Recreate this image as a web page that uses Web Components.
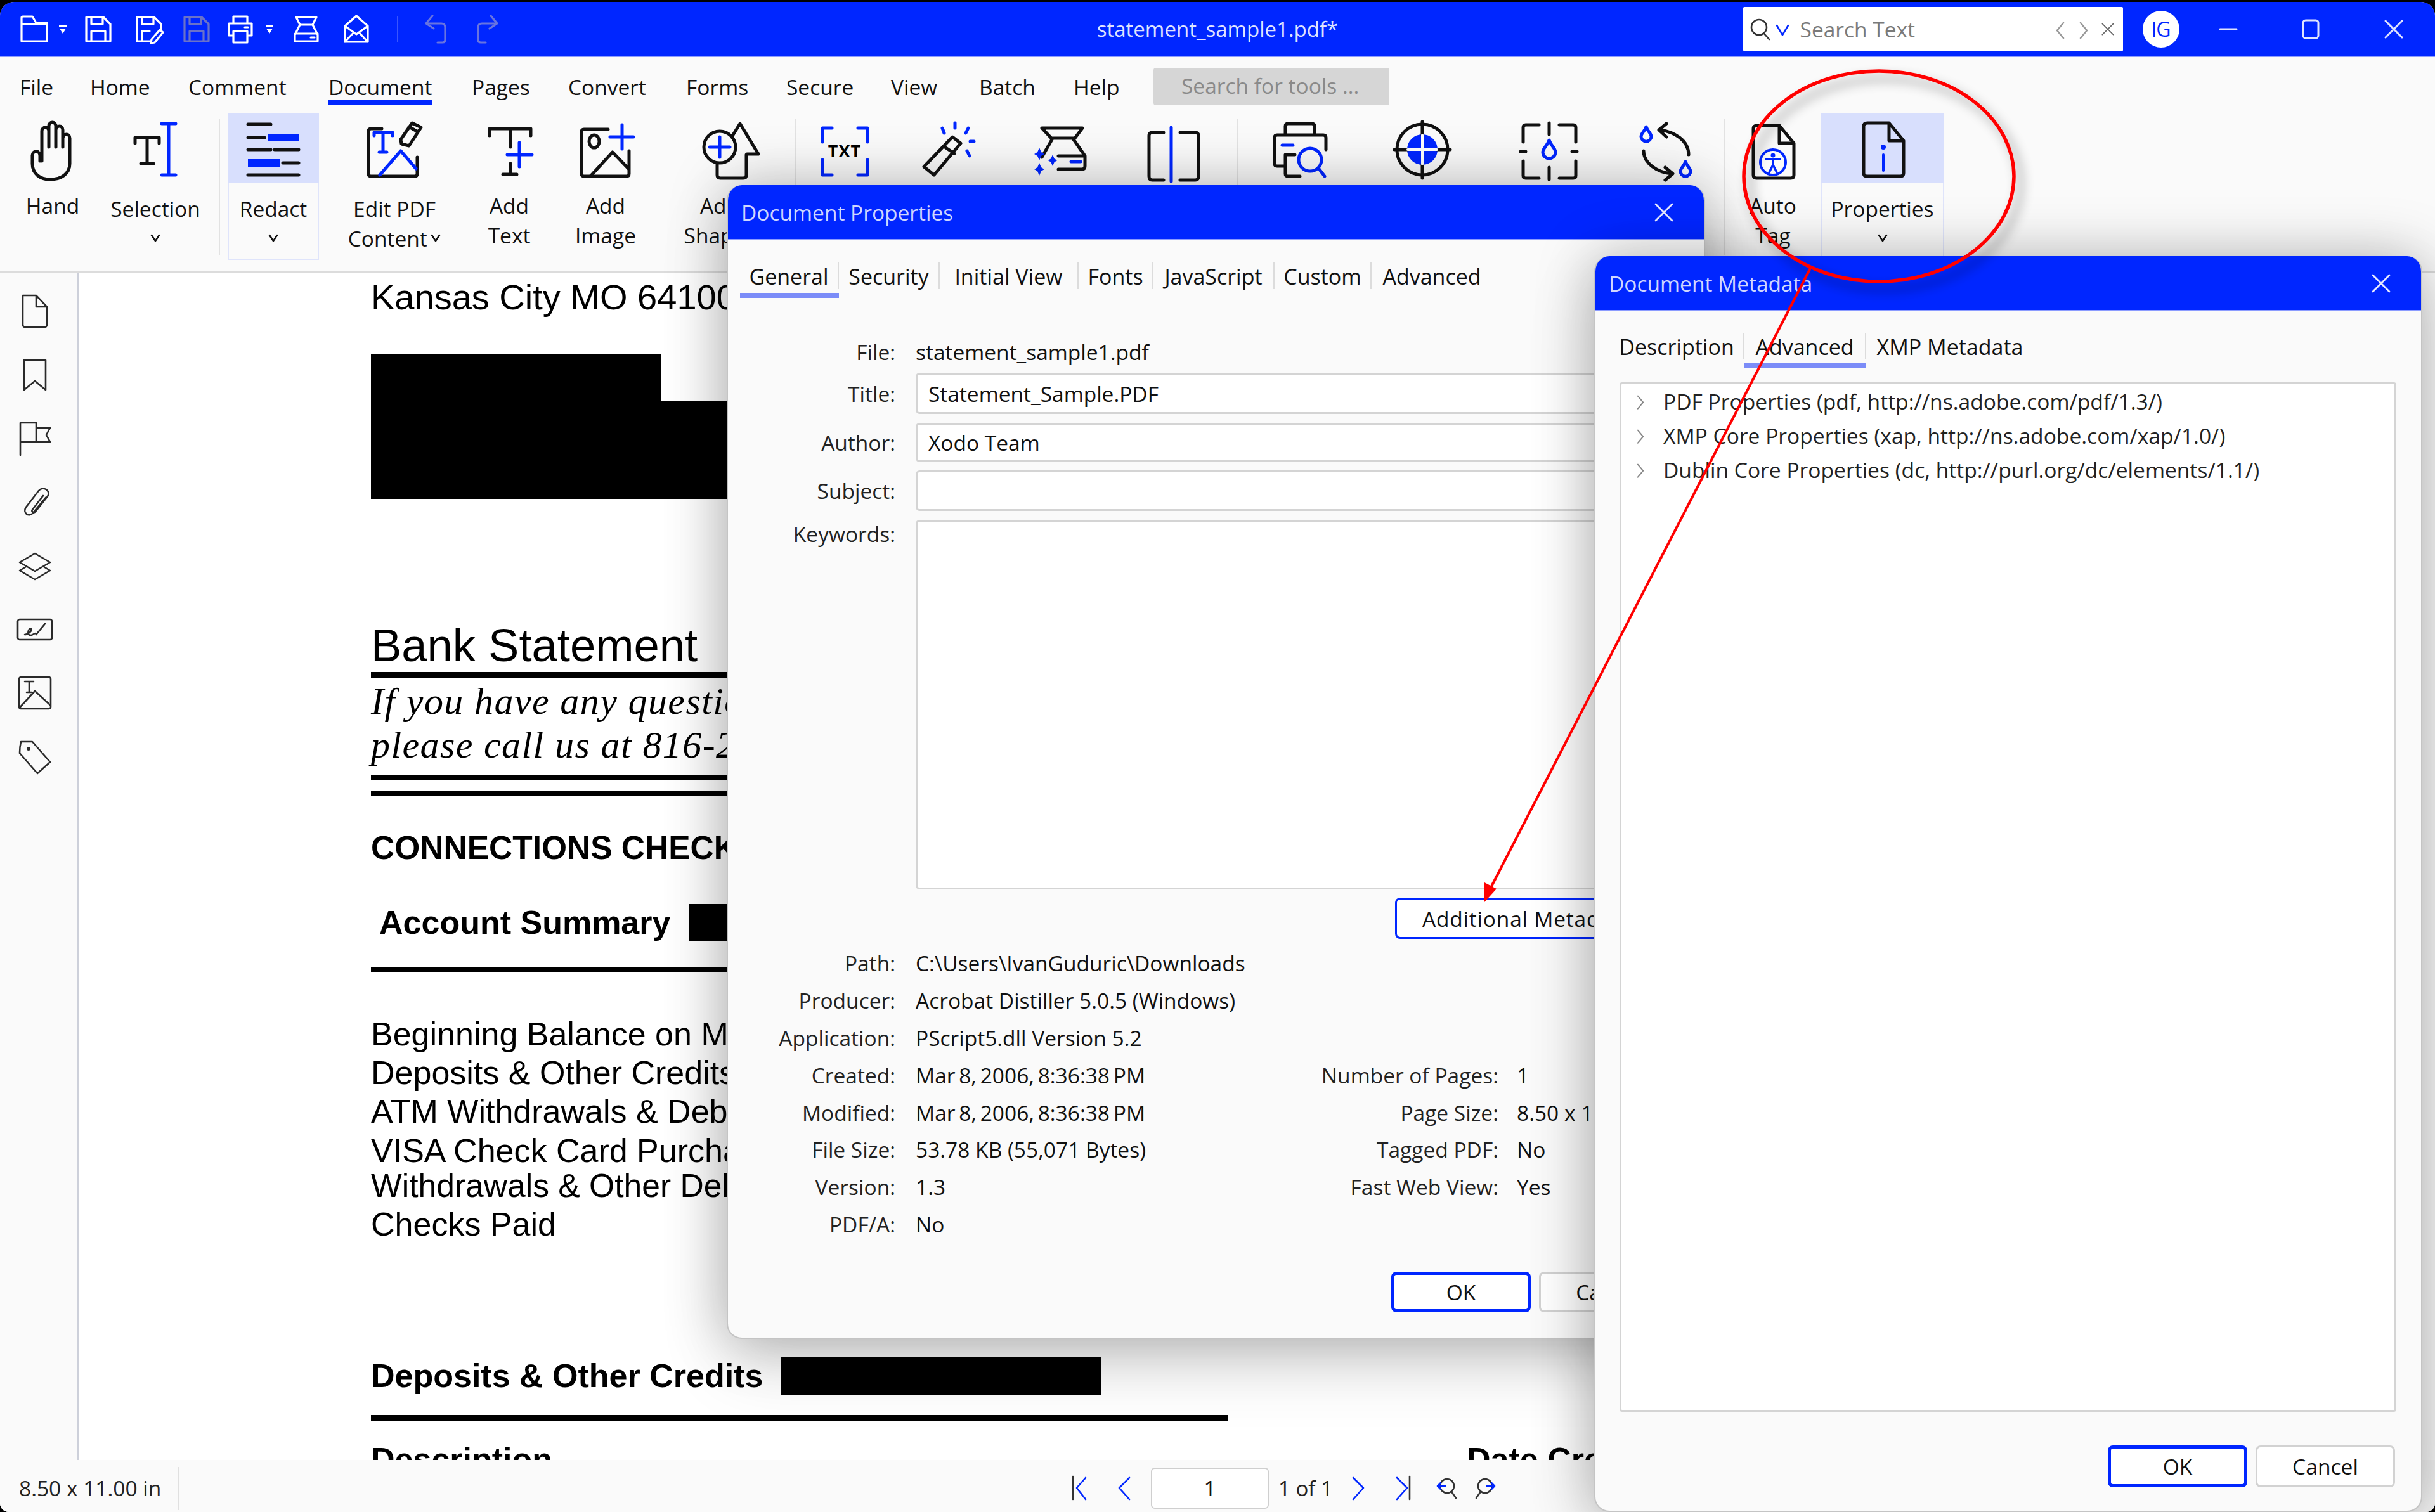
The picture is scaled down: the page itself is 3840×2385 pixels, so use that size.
<!DOCTYPE html>
<html lang="en"><head><meta charset="utf-8"><title>statement_sample1.pdf</title>
<style>
html,body{margin:0;padding:0;background:#000}
body{font-family:"Open Sans","Noto Sans",sans-serif;font-size:33.5px;color:#111}
</style></head>
<body>
<xo-app>
  <xo-titlebar slot="top"></xo-titlebar>
  <xo-menubar slot="top"></xo-menubar>
  <xo-ribbon slot="top"></xo-ribbon>
  <xo-rail slot="rail"></xo-rail>
  <xo-pdf slot="doc"></xo-pdf>
  <xo-status slot="bottom"></xo-status>

  <xo-dialog slot="float" heading="Document Properties" style="left:1146px;top:292px;width:1543px;height:1820px;z-index:2">
    <xo-tabs style="margin:32px 0 0 19px" items="General:156,Security:159,Initial View:219,Fonts:118,JavaScript:191,Custom:153,Advanced:190" active="0"></xo-tabs>
    <xo-props></xo-props>
  </xo-dialog>

  <xo-dialog slot="float" heading="Document Metadata" style="left:2514px;top:404px;width:1306px;height:1981px;z-index:4">
    <xo-tabs style="margin:31px 0 0 23px" items="Description:212,Advanced:192,XMP Metadata:264" active="1"></xo-tabs>
    <xo-meta></xo-meta>
  </xo-dialog>

  <xo-annot slot="float" style="z-index:5"></xo-annot>
</xo-app>

<script>
const BLUE='#0026ff';
const star=(x,y,r)=>`<path class="bf" d="M${x} ${y-r}L${x+r*.3} ${y-r*.3}L${x+r*.8} ${y}L${x+r*.3} ${y+r*.3}L${x} ${y+r}L${x-r*.3} ${y+r*.3}L${x-r*.8} ${y}L${x-r*.3} ${y-r*.3}Z"/>`;
const drop=(x,y,r)=>`<path class="b" d="M${x} ${y-r*1.5}C${x+r*.3} ${y-r*.6} ${x+r} ${y-r*.2} ${x+r} ${y+r*.4}A${r} ${r} 0 0 1 ${x-r} ${y+r*.4}C${x-r} ${y-r*.2} ${x-r*.3} ${y-r*.6} ${x} ${y-r*1.5}Z"/>`;
const ICONS={
 hand:[100,`<path d="M30 68V60C30 51 19 50 18 59V72C18 88 30 97 46 97C64 97 77 88 77 72V32C77 24 67 24 66 32V46M66 46V19C66 11 56 11 55 19V46M55 46V13C55 5 44 5 44 13V46M44 46V21C44 13 33 13 33 21V68"/>`],
 selection:[100,`<path d="M18 40V31H56V40M37 31V72M27 72H47"/><path class="b" d="M60 9H82M71 9V90M60 90H82"/>`],
 redact:[100,`<path d="M10 10H46M10 31H36M10 50H46M52 50H90M65 71H90M10 90H90"/><rect class="bf" x="42" y="25" width="48" height="12"/><rect class="bf" x="10" y="65" width="50" height="12"/>`],
 editpdf:[100,`<path d="M30 17H13Q9 17 9 21V88Q9 92 13 92H82Q86 92 86 88V62"/><path d="M78 8L92 15L73 44L61 41L60 34ZM73 14L87 22"/><path class="b" d="M18 28V23H47V28M32 23V54M26 54H38M27 90L60 52L84 80"/>`],
 addtext:[100,`<path d="M19 28V17H84V28M52 17V46M52 72V89M40 89H62"/><path class="b" d="M47 58H86M66 39V77"/>`],
 addimage:[100,`<path d="M54 18H16Q12 18 12 22V88Q12 92 16 92H83Q87 92 87 88V52"/><ellipse cx="32" cy="37" rx="8" ry="10"/><path d="M26 92L61 54L86 80"/><path class="b" d="M57 30H94M76 11V49"/>`],
 addshape:[100,`<circle cx="50" cy="46" r="25"/><path d="M69 30L82 9L111 57H93M46 71V90Q46 95 51 95H87Q92 95 92 90V58"/><path class="b" d="M50 30V62M34 46H66"/>`],
 txt:[100,`<path class="b" d="M15 38V16H30M71 16H86V38M15 66V90H30M71 90H86V66"/><text x="50" y="62" text-anchor="middle" font-family="'Open Sans',sans-serif" font-weight="700" font-size="27" letter-spacing="1" fill="#000" stroke="none">TXT</text>`],
 wand:[100,`<path d="M55 30L68 40L26 90L10 77ZM43 46L58 56"/><path class="b" d="M59 8V16M39 16L42 24M80 16L76 24M83 37H89M78 52L82 60"/>`],
 scan:[100,`<path d="M20 16H84L72 32H35ZM36 34L20 62M70 34L88 60V76Q88 81 83 81H46M46 60H88"/><path class="b" d="M66 69H81"/>${star(16,57,10)}${star(37,67,9)}${star(16,81,10)}`],
 split:[100,`<path d="M34 23H16Q11 23 11 28V92Q11 98 16 98H34M60 23H84Q89 23 89 28V92Q89 98 84 98H60"/><path class="b" d="M46 15V100"/>`],
 printsearch:[100,`<path d="M27 27V13Q27 9 31 9H69Q73 9 73 13V27M91 50V31Q91 27 87 27H14Q10 27 10 31V72Q10 76 14 76H26M27 58V88Q27 92 31 92H50M27 58H42"/><path class="b" d="M22 43H39M79 79L89 92"/><circle class="b" cx="66" cy="66" r="18"/>`],
 target:[100,`<circle cx="50" cy="50" r="40"/><circle class="bf" cx="50" cy="50" r="24"/><path d="M6 50H27M73 50H94M50 6V27M50 73V95"/><path style="stroke:#fff;stroke-width:4" d="M27 50H73M50 27V73"/>`],
 cropdrop:[100,`<path d="M9 38V15Q9 11 13 11H34M66 11H88Q92 11 92 15V38M9 68V91Q9 95 13 95H34M66 95H88Q92 95 92 91V68M5 53H13M86 53H94M50 8V26M50 78V97"/>${drop(50,50,10)}`],
 refreshdrop:[100,`<path d="M40 19C62 22 85 35 85 58M50 9L38 19L50 30M14 52C14 72 36 86 58 88M48 78L60 88L48 98"/>${drop(18,26,8)}${drop(80,81,8)}`],
 autotag:[100,`<path d="M25 12H60L83 40V90Q83 95 78 95H24Q19 95 19 90V17Q19 12 25 12ZM60 12V40H83"/><circle class="b" style="stroke-width:4" cx="50" cy="70" r="20"/><circle class="bf" cx="50" cy="59" r="3.5"/><path class="b" style="stroke-width:3.5" d="M39 65H61M50 65V74M50 74L44 86M50 74L56 86"/>`],
 properties:[100,`<path d="M26 8H60L83 36V87Q83 92 78 92H25Q20 92 20 87V13Q20 8 26 8ZM60 8V36H83"/><circle class="bf" cx="51" cy="46" r="4"/><path class="b" style="stroke-width:4" d="M51 58V83"/>`],
 chev:[16,`<path d="M2 4L8 13L14 4"/>`],
 folder:[46,`<path d="M3 42V5Q3 3 5 3H20L26 13H43V42ZM3 15H43"/>`],
 save:[46,`<path d="M4 4H31L42 15V42H4ZM12 4V15H30V4M12 42V26H34V42"/>`],
 saveas:[46,`<path d="M4 4H31L42 15V26M26 42H4V4M12 4V15H30V4M12 42V26H24"/><path d="M40 24L45 28L32 44L26 45L27 39Z"/>`],
 print:[46,`<path d="M12 14V3H34V14M5 33V14H41V33H34M12 33H5M12 26H34V44H12ZM30 20H35"/>`],
 scantop:[46,`<path d="M7 4H39L33 16H13ZM13 16L5 32V42H41V32L33 16M5 30H41M30 36H36"/>`],
 mail:[46,`<path d="M5 18L23 2L41 18V43H5ZM5 18L23 31L41 18M5 43L19 28M41 43L27 28"/>`],
 undo:[46,`<path d="M14 2L4 14L16 22M4 14H28Q34 14 34 20V40Q34 44 30 44H22"/>`],
 redo:[46,`<path d="M32 2L42 14L30 22M42 14H18Q12 14 12 20V40Q12 44 16 44H24"/>`],
 tri:[16,`<path style="fill:currentColor;stroke:none" d="M2 1H14V4H2ZM3 7H13L8 15Z"/>`],
 rdoc:[56,`<path d="M9 4H30L47 22V50Q47 54 43 54H13Q9 54 9 50ZM30 4V22H47"/>`],
 rbook:[56,`<path d="M11 5H45V52L28 38L11 52Z"/>`],
 rflag:[56,`<path d="M5 55V4H30V34H5M30 12H52L46 23L52 34H30"/>`],
 rclip:[56,`<path d="M45 21L25 45C19 53 8 45 14 36L34 10C41 2 54 10 48 19L29 43C26 46 22 43 24 40L41 18"/>`],
 rlayer:[56,`<path d="M28 9L52 23L28 37L4 23ZM14 30L4 36L28 50L52 36L42 30"/>`],
 rsign:[56,`<rect x="1" y="12" width="54" height="32" rx="3"/><path d="M12 36C16 36 25 30 22 27C18 25 15 35 20 37C24 38 26 34 29 34M30 36L44 19"/>`],
 rimage:[56,`<rect x="3" y="3" width="50" height="50" rx="3"/><path d="M12 10H26M19 10V27M15 27H23M5 50L28 25L52 47"/>`],
 rtag:[56,`<path d="M6 4H24L52 36L32 54L4 22Q4 12 6 4Z"/><circle cx="18" cy="15" r="1.6"/>`],
 first:[40,`<path class="g" d="M8 2V38"/><path class="b" d="M28 4L14 20L28 38"/>`],
 prev:[40,`<path class="b" d="M29 4L13 20L29 38"/>`],
 next:[40,`<path class="b" d="M12 4L28 20L12 38"/>`],
 last:[40,`<path class="b" d="M11 4L27 20L11 38"/><path class="g" d="M31 2V38"/>`],
 zback:[40,`<circle class="g" cx="20" cy="17" r="11"/><path class="g" d="M27 26L34 36"/><path class="b" d="M5 17H17M10 12L5 17L10 22"/>`],
 zfwd:[40,`<circle class="g" cx="20" cy="17" r="11"/><path class="g" d="M13 26L6 36"/><path class="b" d="M23 17H35M30 12L35 17L30 22"/>`],
 magn:[36,`<circle cx="15" cy="15" r="12"/><path d="M23 25L31 34"/>`],
 thin:[24,`<path d="M3 6L12 21L21 6"/>`],
 lt:[24,`<path d="M17 2L7 14L17 26"/>`],
 gt:[24,`<path d="M7 2L17 14L7 26"/>`],
 x:[30,`<path d="M2 2L28 28M28 2L2 28"/>`],
 min:[30,`<path d="M2 15H28"/>`],
 max:[30,`<rect x="3" y="1" width="24" height="28" rx="4"/>`]
};
function def(name,css,html,init){
  customElements.define(name,class extends HTMLElement{
    connectedCallback(){
      if(this.shadowRoot)return;
      const r=this.attachShadow({mode:'open'});
      r.innerHTML=`<style>${css}</style>`+(typeof html==='function'?html(this):html);
      if(init)init(this,r);
    }
  });
}
def('xo-icon',`:host{display:inline-block;flex:none;line-height:0}
svg{display:block;overflow:visible;fill:none;stroke:currentColor;stroke-width:var(--sw,5);stroke-linecap:round;stroke-linejoin:round}
.b{stroke:${BLUE}}.bf{fill:${BLUE};stroke:none}.g{stroke:#333}`,
 h=>{const [v,c]=ICONS[h.getAttribute('name')];const s=h.getAttribute('size')||v;
 return `<svg viewBox="0 0 ${v} ${v}" width="${s}" height="${s}">${c}</svg>`});

def('xo-app',`:host{display:block;position:relative;width:3840px;height:2385px;overflow:hidden;background:#000}
.win{position:absolute;inset:3px 0 0 0;border-radius:22px 22px 14px 14px;overflow:hidden;background:#fafafa;display:flex;flex-direction:column}
.mid{flex:1;display:flex;min-height:0;overflow:hidden}
::slotted(xo-dialog),::slotted(xo-annot){position:absolute}
`,`<div class="win"><slot name="top"></slot><div class="mid"><slot name="rail"></slot><slot name="doc"></slot></div><slot name="bottom"></slot></div><slot name="float"></slot>`);

def('xo-titlebar',`:host{display:flex;align-items:center;height:85px;background:${BLUE};border-bottom:2px solid #8c9cff;color:#fff;flex:none;font-size:33.5px}
.side{flex:1 1 0;display:flex;align-items:center;min-width:0}
.r{justify-content:flex-end}
.t{color:#dfe3ff;white-space:nowrap;font-size:33px}
.l{--sw:3.2}
.dis{color:#6a72c8}.fade{color:#6874e0}
.sep{width:2px;height:42px;background:#3a55ff}
.search{width:599px;height:70px;background:#fff;box-sizing:border-box;display:flex;align-items:center;color:#7a7a7a;padding-left:10px;font-size:33.5px;--sw:2.6;border-radius:2px}
.search span{width:398px;margin-left:16px;white-space:nowrap}
.av{width:58px;height:58px;border-radius:50%;background:#fff;color:${BLUE};display:flex;align-items:center;justify-content:center;margin-left:31px;font-size:32px;letter-spacing:-1px;margin-right:12px}
.w{width:130.5px;display:flex;justify-content:center;color:#dfe3ff;--sw:3}
`,`<div class="side l">
<xo-icon name="folder" style="margin-left:31px"></xo-icon><xo-icon name="tri" style="margin-left:14px"></xo-icon>
<xo-icon name="save" style="margin-left:25px"></xo-icon><xo-icon name="saveas" style="margin-left:34px"></xo-icon>
<xo-icon name="save" class="dis" style="margin-left:29px"></xo-icon><xo-icon name="print" style="margin-left:23px"></xo-icon>
<xo-icon name="tri" style="margin-left:15px"></xo-icon><xo-icon name="scantop" style="margin-left:27px"></xo-icon>
<xo-icon name="mail" style="margin-left:33px"></xo-icon><div class="sep" style="margin-left:41px"></div>
<xo-icon name="undo" class="fade" style="margin-left:40px"></xo-icon><xo-icon name="redo" class="fade" style="margin-left:28px"></xo-icon>
</div>
<div class="t">statement_sample1.pdf*</div>
<div class="side r">
<div class="search"><xo-icon name="magn" style="color:#333"></xo-icon><xo-icon name="thin" style="color:${BLUE};margin-left:4px"></xo-icon><span>Search Text</span>
<xo-icon name="lt" style="color:#999"></xo-icon><xo-icon name="gt" style="color:#999;margin-left:13px"></xo-icon><xo-icon name="x" size="20" style="color:#666;margin-left:16px"></xo-icon></div>
<div class="av">IG</div>
<div class="w"><xo-icon name="min"></xo-icon></div><div class="w"><xo-icon name="max"></xo-icon></div><div class="w"><xo-icon name="x"></xo-icon></div>
</div>`);

def('xo-menu-item',`:host{display:block;flex:none;height:56px}
span{display:inline-block;height:56px;line-height:54px;white-space:nowrap;box-sizing:border-box}
:host([active]) span{box-shadow:inset 0 -8px 0 ${BLUE}}`,`<span><slot></slot></span>`);
def('xo-menubar',`:host{display:flex;height:80px;box-sizing:border-box;padding:20px 0 0 31px;background:#fafafa;flex:none;color:#111;font-size:33.5px}
.s{width:372px;height:59px;margin-top:-3px;background:#d6d6d6;color:#8a8a8a;border-radius:4px;line-height:56px;padding-left:44px;box-sizing:border-box;white-space:nowrap}`,
`<xo-menu-item style="width:111px">File</xo-menu-item><xo-menu-item style="width:155px">Home</xo-menu-item>
<xo-menu-item style="width:221px">Comment</xo-menu-item><xo-menu-item active style="width:226px">Document</xo-menu-item>
<xo-menu-item style="width:152px">Pages</xo-menu-item><xo-menu-item style="width:186px">Convert</xo-menu-item>
<xo-menu-item style="width:158px">Forms</xo-menu-item><xo-menu-item style="width:165px">Secure</xo-menu-item>
<xo-menu-item style="width:139px">View</xo-menu-item><xo-menu-item style="width:149px">Batch</xo-menu-item>
<xo-menu-item style="width:126px">Help</xo-menu-item><div class="s">Search for tools ...</div>`);

def('xo-ribbon-item',`:host{display:block;flex:none;box-sizing:border-box;height:232px;color:#111;font-size:33.5px}
.ic{height:110px;display:flex;justify-content:center;padding-top:8px;box-sizing:border-box}
.lb{text-align:center;line-height:47px;padding-top:13px;white-space:nowrap}
:host([low]) .lb{padding-top:18px}
:host([active]){border:2px solid #dfe4fb;border-top:0}
:host([active]) .ic{background:#d8dffd;margin:0 -2px}
.ch{display:flex;justify-content:center;height:44px;align-items:center;--sw:2.6}
`,h=>`<div class="ic"><xo-icon name="${h.getAttribute('icon')}"></xo-icon></div><div class="lb"><slot></slot></div>`+(h.hasAttribute('chev')?`<div class="ch"><xo-icon name="chev"></xo-icon></div>`:''));
def('xo-ribbon',`:host{display:flex;box-sizing:content-box;padding-top:8px;height:250px;background:#fafafa;border-bottom:2px solid #dcdcdc;flex:none;overflow:hidden}
.sep{width:2px;height:215px;margin-top:9px;background:#e2e2e2;flex:none}
`,`<xo-ribbon-item icon="hand" style="width:166px">Hand</xo-ribbon-item>
<xo-ribbon-item icon="selection" low chev style="width:158px">Selection</xo-ribbon-item>
<div class="sep" style="margin-left:21px"></div>
<xo-ribbon-item icon="redact" low chev active style="width:144px;margin-left:12px">Redact</xo-ribbon-item>
<xo-ribbon-item icon="editpdf" low style="width:238px">Edit PDF<br>Content&#8201;<xo-icon name="chev" style="--sw:2.6;vertical-align:6px"></xo-icon></xo-ribbon-item>
<xo-ribbon-item icon="addtext" style="width:124px">Add<br>Text</xo-ribbon-item>
<xo-ribbon-item icon="addimage" style="width:180px">Add<br>Image</xo-ribbon-item>
<xo-ribbon-item icon="addshape" style="width:180px">Add<br>Shapes</xo-ribbon-item>
<div class="sep" style="margin-left:29px"></div>
<xo-ribbon-item icon="txt" style="width:152px"></xo-ribbon-item>
<xo-ribbon-item icon="wand" style="width:178px"></xo-ribbon-item>
<xo-ribbon-item icon="scan" style="width:174px"></xo-ribbon-item>
<xo-ribbon-item icon="split" style="width:182px"></xo-ribbon-item>
<div class="sep" style="margin-left:9px"></div>
<xo-ribbon-item icon="printsearch" style="width:194px"></xo-ribbon-item>
<xo-ribbon-item icon="target" style="width:192px"></xo-ribbon-item>
<xo-ribbon-item icon="cropdrop" style="width:208px"></xo-ribbon-item>
<xo-ribbon-item icon="refreshdrop" style="width:162px"></xo-ribbon-item>
<div class="sep" style="margin-left:10px"></div>
<xo-ribbon-item icon="autotag" style="width:150px">Auto<br>Tag</xo-ribbon-item>
<xo-ribbon-item icon="properties" low chev active style="width:195px">Properties</xo-ribbon-item>`);

def('xo-rail',`:host{display:flex;flex-direction:column;width:122px;box-sizing:content-box;background:#fafafa;border-right:3px solid #cdd0da;padding-top:10px;flex:none;color:#2a2a2a;--sw:2.6}
div{height:100.5px;display:flex;align-items:center;justify-content:center;padding-right:12px}`,
['rdoc','rbook','rflag','rclip','rlayer','rsign','rimage','rtag'].map(n=>`<div><xo-icon name="${n}"></xo-icon></div>`).join(''));

const SERIF="font:italic 60px/64px 'Liberation Serif',serif;letter-spacing:1.4px";
const P=[
 ['t',438.6,60,'Kansas City MO 64100','font-size:56px'],
 ['b',559,73,457],['b',632,155,800],
 ['t',980,76,'Bank Statement','font-size:72.4px'],
 ['r',1060,10,1352],
 ['t',1073.75,64,'If you have any questio',SERIF],
 ['t',1142.75,64,'please call us at 816-2',SERIF],
 ['r',1222,8,1352],['r',1248,8,1352],
 ['t',1310.2,54,'CONNECTIONS CHECK','font-size:51.5px;font-weight:700'],
 ['x',1426,59,'Account Summary',502,13,300],
 ['r',1525,9,1352],
 ['t',1604,54,'Beginning Balance on M','font-size:52px'],
 ['t',1665,54,'Deposits &amp; Other Credits','font-size:52px'],
 ['t',1726,54,'ATM Withdrawals &amp; Deb','font-size:52px'],
 ['t',1788,54,'VISA Check Card Purcha','font-size:52px'],
 ['t',1843,54,'Withdrawals &amp; Other Deb','font-size:51.6px'],
 ['t',1904,54,'Checks Paid','font-size:52px'],
 ['x',2140,61,'Deposits &amp; Other Credits',647,0,505],
 ['r',2232,9,1352],
 ['y',2275,54,'Description','Date Credited',1728]
];
def('xo-pdf',`:host{display:block;flex:1;min-width:0;background:#fff;color:#000;overflow:hidden;padding-left:460px;font-family:"Liberation Sans",Arial,sans-serif}
.t,.f{white-space:nowrap}.f{display:flex;align-items:center;font:700 52px "Liberation Sans",Arial,sans-serif}
.k{background:#000;flex:none}`,
()=>{let y=430,out='';for(const p of P){const [k,top,h]=p;const m=(top-y).toFixed(2);y=top+h;
 const base=`margin-top:${m}px;height:${h}px;`;
 if(k==='t')out+=`<div class="t" style="${base}line-height:${h}px;${p[4]}">${p[3]}</div>`;
 if(k==='b'||k==='r')out+=`<div class="k" style="${base}width:${p[3]}px"></div>`;
 if(k==='x')out+=`<div class="f" style="${base}"><div style="width:${p[4]-p[5]}px;padding-left:${p[5]}px">${p[3]}</div><div class="k" style="width:${p[6]}px;height:${h}px"></div></div>`;
 if(k==='y')out+=`<div class="f" style="${base}"><div style="width:${p[5]}px">${p[3]}</div><div>${p[4]}</div></div>`;
 }return out});

def('xo-status',`:host{display:flex;align-items:center;height:82px;padding-top:6px;box-sizing:border-box;background:#fafafa;flex:none;color:#222;font-size:33.5px;--sw:2.6;position:relative;z-index:3}
.sz{width:281px;padding-left:30px;box-sizing:border-box;white-space:nowrap}
.sep{width:2px;height:68px;margin-top:2px;background:#e0e0e0}
.inp{width:186px;height:65px;box-sizing:border-box;background:#fff;border:2px solid #cfcfcf;border-radius:6px;text-align:center;line-height:60px;color:#111}
.of{width:84px;white-space:nowrap;font-size:33px;text-align:center}`,
`<div class="sz">8.50 x 11.00 in</div><div class="sep"></div>
<xo-icon name="first" style="margin-left:1401px"></xo-icon><xo-icon name="prev" style="margin-left:28px"></xo-icon>
<div class="inp" style="margin-left:23px">1</div><div class="of" style="margin-left:15px">1 of 1</div>
<xo-icon name="next" style="margin-left:22px"></xo-icon><xo-icon name="last" style="margin-left:30px"></xo-icon>
<xo-icon name="zback" style="margin-left:30px"></xo-icon><xo-icon name="zfwd" style="margin-left:20px"></xo-icon>`);

def('xo-dialog',`:host{display:flex;flex-direction:column;box-sizing:border-box;background:#fafafa;border-radius:24px;border:2px solid #c4c4c4;border-top:0;color:#111;box-shadow:0 0 90px rgba(0,0,0,.26),0 40px 110px rgba(0,0,0,.14);overflow:hidden;font-size:33.5px}
header{height:86px;flex:none;background:${BLUE};color:#cfd6ff;display:flex;align-items:center;justify-content:space-between;padding:0 50px 0 23px;box-sizing:border-box;border-bottom:1px solid #8c9cff;--sw:2.8;margin:0 -2px}
`,h=>`<header><span>${h.getAttribute('heading')}</span><xo-icon name="x" style="color:#e6e9ff"></xo-icon></header><slot></slot>`);

def('xo-tabs',`:host{display:flex;height:60px;flex:none;font-size:34px}
.tab{box-sizing:border-box;height:60px;border-bottom:8px solid transparent;padding-top:4px;flex:none}
.tab.on{border-bottom-color:#7b8cf8}
.tab div{height:42px;line-height:44px;text-align:center;white-space:nowrap;border-right:2px solid #dcdcdc}
.tab:last-child div{border-right:0}`,
h=>{const a=+h.getAttribute('active');return h.getAttribute('items').split(',').map((s,i)=>{const [t,w]=s.split(':');
 return `<div class="tab ${i===a?'on':''}" style="width:${w}px"><div>${t}</div></div>`}).join('')});

def('xo-btn',`:host{display:flex;align-items:center;justify-content:center;box-sizing:border-box;background:#fff;border:3px solid #d2d2d2;border-radius:8px;flex:none;white-space:nowrap;color:#111}
:host([focus]){border:3px solid ${BLUE}}
:host([primary]){border:5px solid ${BLUE}}`,`<slot></slot>`);

const ROWS=[['Path:','C:\\Users\\IvanGuduric\\Downloads'],['Producer:','Acrobat Distiller 5.0.5 (Windows)'],['Application:','PScript5.dll Version 5.2'],
['Created:','<span class="ws">Mar 8, 2006, 8:36:38 PM</span>','Number of Pages:','1'],['Modified:','<span class="ws">Mar 8, 2006, 8:36:38 PM</span>','Page Size:','8.50 x 11.00 in'],
['File Size:','53.78 KB (55,071 Bytes)','Tagged PDF:','No'],['Version:','1.3','Fast Web View:','Yes'],['PDF/A:','No']];
def('xo-props',`:host{display:block;color:#222;font-size:33.5px}
.row{display:flex;align-items:center}
.lab{width:264px;text-align:right;flex:none;white-space:nowrap}
.val{margin-left:32px;white-space:nowrap;color:#111}
.inp{margin-left:32px;width:1206px;box-sizing:border-box;background:#fff;border:3px solid #d4d4d4;border-radius:6px;padding-left:17px;height:100%;display:flex;align-items:center;color:#111;flex:none}
.grid{display:grid;grid-template-columns:264px 500px 451px 1fr;grid-auto-rows:58.9px;align-items:center;margin-top:8.5px}
.grid>div{white-space:nowrap}
.ws{word-spacing:-3px}
.c1,.c3{text-align:right}.c2{padding-left:32px;color:#111}.c4{padding-left:29px;color:#111}
`,`<div class="row" style="margin-top:55px;height:60px"><div class="lab">File:</div><div class="val">statement_sample1.pdf</div></div>
<div class="row" style="margin-top:3px;height:65px"><div class="lab">Title:</div><div class="inp">Statement_Sample.PDF</div></div>
<div class="row" style="margin-top:14px;height:62px"><div class="lab">Author:</div><div class="inp">Xodo Team</div></div>
<div class="row" style="margin-top:13px;height:64px"><div class="lab">Subject:</div><div class="inp"></div></div>
<div class="row" style="margin-top:14px;height:583px;align-items:flex-start"><div class="lab" style="line-height:44px">Keywords:</div><div class="inp"></div></div>
<xo-btn focus style="margin:13px 0 0 1052px;width:450px;height:65px;justify-content:flex-start;padding-left:40px;letter-spacing:.8px">Additional Metadata</xo-btn>
<div class="grid">${ROWS.map(r=>`<div class="c1">${r[0]}</div><div class="c2">${r[1]}</div><div class="c3">${r[2]||''}</div><div class="c4">${r[3]||''}</div>`).join('')}</div>
<div style="display:flex;margin:45px 0 0 1046px"><xo-btn primary style="width:220px;height:64px">OK</xo-btn><xo-btn style="width:220px;height:64px;margin-left:13px">Cancel</xo-btn></div>`);

def('xo-meta',`:host{display:flex;flex-direction:column;flex:1;font-size:33.6px;color:#111;--sw:2.4}
.tree{margin:22px 0 0 38px;width:1225px;height:1624px;box-sizing:border-box;background:#fff;border:3px solid #d4d4d4;border-radius:4px}
.n{height:54px;display:flex;align-items:center;padding-left:20px;white-space:nowrap;color:#222}
.n xo-icon{color:#888;margin-right:26px}
.b{display:flex;justify-content:flex-end;margin:53px 41px 0 0}`,
`<div class="tree">
<div class="n"><xo-icon name="gt" size="20"></xo-icon>PDF Properties (pdf, http://ns.adobe.com/pdf/1.3/)</div>
<div class="n"><xo-icon name="gt" size="20"></xo-icon>XMP Core Properties (xap, http://ns.adobe.com/xap/1.0/)</div>
<div class="n"><xo-icon name="gt" size="20"></xo-icon>Dublin Core Properties (dc, http://purl.org/dc/elements/1.1/)</div>
</div>
<div class="b"><xo-btn primary style="width:220px;height:66px">OK</xo-btn><xo-btn style="width:220px;height:66px;margin-left:13px">Cancel</xo-btn></div>`);

def('xo-annot',`:host{display:block;inset:0;pointer-events:none}svg{display:block}`,
`<svg width="3840" height="2385" viewBox="0 0 3840 2385">
<defs><filter id="s" x="-20%" y="-20%" width="150%" height="150%"><feDropShadow dx="10" dy="12" stdDeviation="9" flood-color="#000" flood-opacity=".45"/></filter></defs>
<ellipse cx="2963" cy="278" rx="213" ry="166" fill="none" stroke="#f00" stroke-width="5.5" filter="url(#s)"/>
<path d="M2856 421L2349 1404" stroke="#f00" stroke-width="4" fill="none"/>
<path d="M2341 1423L2341 1392L2360 1402Z" fill="#f00"/>
</svg>`);
</script>
</body></html>
